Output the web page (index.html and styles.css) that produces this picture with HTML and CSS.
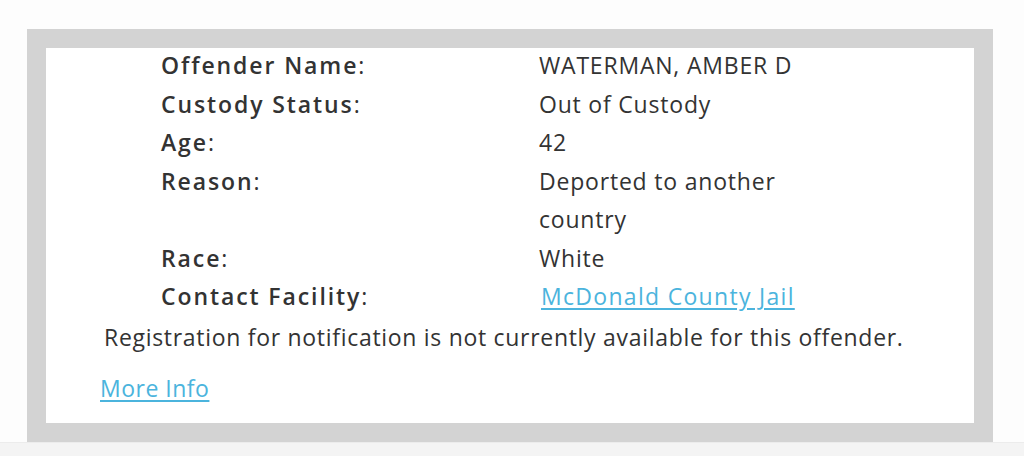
FILE: index.html
```html
<!DOCTYPE html>
<html>
<head>
<meta charset="utf-8">
<link rel="stylesheet" href="styles.css">
</head>
<body>
<div class="page">
  <div class="frame">
    <div class="inner">
      <div class="details">
        <div class="label">Offender Name<span class="colon">:</span></div><div class="value">WATERMAN, AMBER D</div>
        <div class="label">Custody Status<span class="colon">:</span></div><div class="value">Out of Custody</div>
        <div class="label">Age<span class="colon">:</span></div><div class="value">42</div>
        <div class="label">Reason<span class="colon">:</span></div><div class="value">Deported to another country</div>
        <div class="label">Race<span class="colon">:</span></div><div class="value">White</div>
        <div class="label">Contact Facility<span class="colon">:</span></div><div class="value"><a class="link facility" href="#">McDonald County Jail</a></div>
      </div>
      <p class="notice">Registration for notification is not currently available for this offender.</p>
      <a class="link more" href="#">More Info</a>
    </div>
  </div>
</div>
<div class="footer"></div>
</body>
</html>
```
FILE: styles.css
```css
html, body {
  margin: 0;
  padding: 0;
}
body {
  background: #fdfdfd;
  font-family: "Open Sans", Lato, Arial, sans-serif;
  color: #333333;
  height: 456px;
  overflow: hidden;
}
.page {
  padding: 29px 0 0 27px;
}
.frame {
  width: 966px;
  height: 413px;
  box-sizing: border-box;
  border: 19px solid #d3d3d3;
  background: #ffffff;
}
.inner {
  height: 375px;
  box-sizing: border-box;
  padding: 0;
}
.details {
  display: grid;
  grid-template-columns: 378px 280px;
  margin: -2px 0 0 115px;
  font-size: 23px;
  line-height: 38.5px;
}
.label {
  font-weight: 600;
  letter-spacing: 1.9px;
  color: #333333;
}
.colon {
  font-weight: 400;
}
.value {
  font-weight: 400;
  letter-spacing: 0.8px;
  color: #333333;
}
.facility {
  margin-left: 2px;
  letter-spacing: 1.3px;
}
.link {
  color: #4bb4dd;
  text-decoration: underline;
  text-underline-offset: 3px;
}
.notice {
  margin: 2px 0 0 58px;
  font-size: 23px;
  letter-spacing: 0.7px;
  line-height: 38px;
}
.more {
  display: inline-block;
  margin: 13px 0 0 54px;
  font-size: 23px;
  letter-spacing: 0.5px;
  line-height: 38px;
}
.footer {
  height: 14px;
  background: #f4f4f4;
  border-top: 1px solid #ececec;
}
```
